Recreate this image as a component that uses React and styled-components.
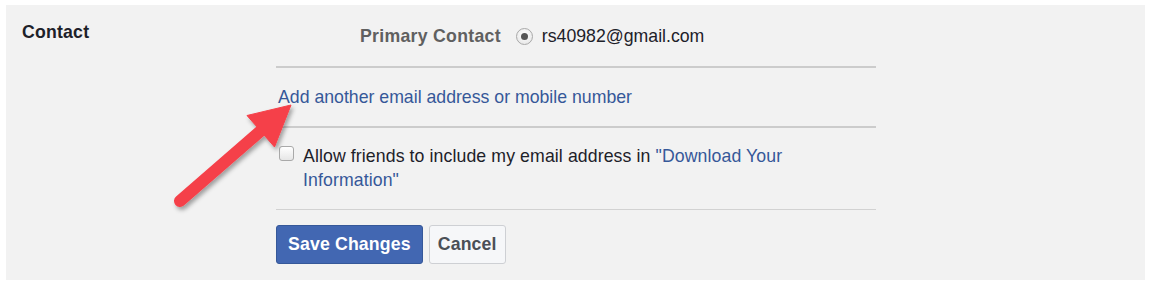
import React from "react";
import styled, { createGlobalStyle } from "styled-components";

const GlobalStyle = createGlobalStyle`
  html, body {
    margin: 0;
    padding: 0;
    background: #ffffff;
  }
  body {
    font-family: "Liberation Sans", Arial, sans-serif;
    font-size: 17.7px;
    line-height: 23.5px;
    color: #1d2129;
  }
`;

const Page = styled.div`
  padding: 5px 9px 10px 6px;
`;

const Panel = styled.div`
  position: relative;
  display: flex;
  height: 275px;
  box-sizing: border-box;
  background: #f2f2f2;
`;

const LabelCol = styled.div`
  width: 270px;
  box-sizing: border-box;
  padding: 17px 0 0 16px;
  font-weight: bold;
  letter-spacing: 0.2px;
  line-height: 20px;
  color: #1d2129;
`;

const ContentCol = styled.div`
  width: 600px;
  display: flex;
  flex-direction: column;
`;

const Section = styled.div`
  padding: ${(p) => p.$pad};
  border-bottom: ${(p) => p.$border || "none"};
`;

const PrimaryRow = styled.div`
  display: flex;
  align-items: center;
  padding-left: 84px;
`;

const PrimaryLabel = styled.span`
  font-weight: bold;
  letter-spacing: 0.28px;
  color: #606060;
  margin-right: 15px;
`;

const Radio = styled.span`
  width: 17px;
  height: 17px;
  box-sizing: border-box;
  border-radius: 50%;
  border: 1px solid #a9a9a9;
  background: radial-gradient(circle at 50% 40%, #ffffff 0%, #e2e2e2 100%);
  display: flex;
  align-items: center;
  justify-content: center;
  margin-right: 9px;
  margin-top: -1px;

  &::after {
    content: "";
    width: 7px;
    height: 7px;
    border-radius: 50%;
    background: #555555;
  }
`;

const Email = styled.span`
  color: #1d2129;
`;

const Link = styled.a`
  color: #365899;
  text-decoration: none;
  cursor: pointer;
`;

const CheckRow = styled.label`
  display: flex;
  align-items: flex-start;
`;

const Checkbox = styled.span`
  flex: none;
  width: 15px;
  height: 15px;
  box-sizing: border-box;
  margin: 1px 9px 0 3px;
  border: 1px solid #a9a9a9;
  border-radius: 3px;
  background: linear-gradient(#ffffff, #e6e6e6);
`;

const CheckText = styled.span`
  max-width: 560px;
  letter-spacing: 0.1px;
`;

const Buttons = styled.div`
  display: flex;
  gap: 6px;
`;

const Button = styled.button`
  height: 39px;
  box-sizing: border-box;
  padding: 0 ${(p) => (p.$primary ? "11px" : "8px")};
  border-radius: 3px;
  font-family: "Liberation Sans", Arial, sans-serif;
  font-size: 17.7px;
  font-weight: bold;
  letter-spacing: 0.15px;
  border: 1px solid ${(p) => (p.$primary ? "#365899" : "#ced0d4")};
  background: ${(p) => (p.$primary ? "#4267b2" : "#f6f7f9")};
  color: ${(p) => (p.$primary ? "#ffffff" : "#4b4f56")};
  cursor: pointer;
`;

const ArrowLayer = styled.svg`
  position: absolute;
  left: 0;
  top: 0;
  width: 100%;
  height: 100%;
  pointer-events: none;
  overflow: visible;
`;

const Arrow = () => (
  <ArrowLayer viewBox="6 5 1139 275">
    <defs>
      <filter id="arrowShadow" x="-20%" y="-20%" width="140%" height="140%">
        <feDropShadow dx="2" dy="3" stdDeviation="2" floodColor="#000" floodOpacity="0.35" />
      </filter>
    </defs>
    <g filter="url(#arrowShadow)" fill="#f5414a" stroke="#f5414a">
      <line x1="180" y1="201" x2="264" y2="128" strokeWidth="12" strokeLinecap="round" />
      <polygon points="291,105 247,115.5 274.5,147" strokeWidth="1" strokeLinejoin="round" />
    </g>
  </ArrowLayer>
);

export default function App() {
  return (
    <Page>
      <GlobalStyle />
      <Panel>
        <LabelCol>Contact</LabelCol>
        <ContentCol>
          <Section $pad="20px 0 17.3px" $border="2px solid #cccccc">
            <PrimaryRow>
              <PrimaryLabel>Primary Contact</PrimaryLabel>
              <Radio />
              <Email>rs40982@gmail.com</Email>
            </PrimaryRow>
          </Section>
          <Section $pad="18.2px 0 16.3px 2px" $border="2px solid #cccccc">
            <Link>Add another email address or mobile number</Link>
          </Section>
          <Section $pad="17.6px 0 16.4px" $border="1.5px solid #d2d2d2">
            <CheckRow>
              <Checkbox />
              <CheckText>
                Allow friends to include my email address in{" "}
                <Link>"Download Your Information"</Link>
              </CheckText>
            </CheckRow>
          </Section>
          <Section $pad="15.5px 0 0">
            <Buttons>
              <Button $primary>Save Changes</Button>
              <Button>Cancel</Button>
            </Buttons>
          </Section>
        </ContentCol>
        <Arrow />
      </Panel>
    </Page>
  );
}
